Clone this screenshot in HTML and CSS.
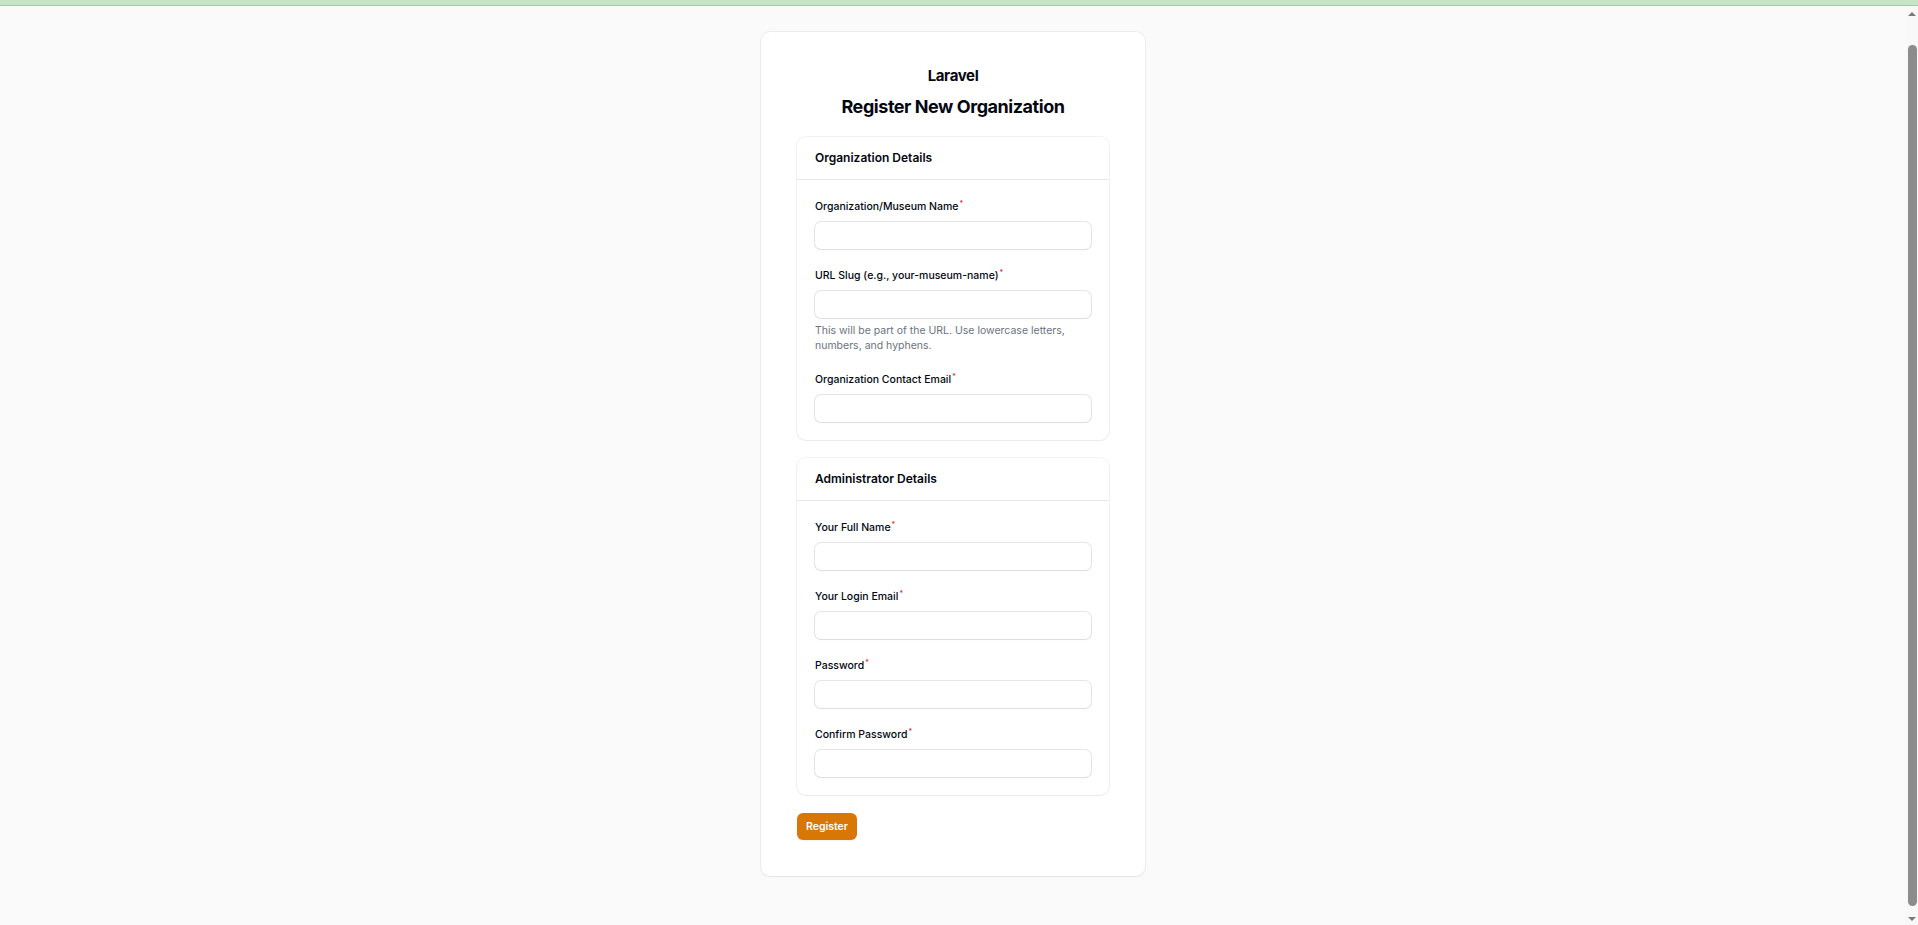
FILE: index.html
```html
<!DOCTYPE html>
<html lang="en">
<head>
<meta charset="utf-8">
<title>Register New Organization</title>
<link rel="stylesheet" href="styles.css">
</head>
<body>
<div class="topbar"></div>
<div class="viewport">
  <main class="page">
    <div class="card">
      <header class="simple-header">
        <div class="brand">Laravel</div>
        <h1 class="heading">Register New Organization</h1>
      </header>
      <form class="form">
        <section class="section">
          <div class="section-header"><h3 class="section-title">Organization Details</h3></div>
          <div class="section-content">
            <div class="field">
              <label class="label">Organization/Museum Name<sup class="req">*</sup></label>
              <div class="input-wrap"><input class="input" type="text"></div>
            </div>
            <div class="field">
              <label class="label">URL Slug (e.g., your-museum-name)<sup class="req">*</sup></label>
              <div class="input-wrap"><input class="input" type="text"></div>
              <p class="helper">This will be part of the URL. Use lowercase letters, numbers, and hyphens.</p>
            </div>
            <div class="field">
              <label class="label">Organization Contact Email<sup class="req">*</sup></label>
              <div class="input-wrap"><input class="input" type="email"></div>
            </div>
          </div>
        </section>
        <section class="section">
          <div class="section-header"><h3 class="section-title">Administrator Details</h3></div>
          <div class="section-content">
            <div class="field">
              <label class="label">Your Full Name<sup class="req">*</sup></label>
              <div class="input-wrap"><input class="input" type="text"></div>
            </div>
            <div class="field">
              <label class="label">Your Login Email<sup class="req">*</sup></label>
              <div class="input-wrap"><input class="input" type="email"></div>
            </div>
            <div class="field">
              <label class="label">Password<sup class="req">*</sup></label>
              <div class="input-wrap"><input class="input" type="password"></div>
            </div>
            <div class="field">
              <label class="label">Confirm Password<sup class="req">*</sup></label>
              <div class="input-wrap"><input class="input" type="password"></div>
            </div>
          </div>
        </section>
        <div class="actions">
          <button class="btn" type="button">Register</button>
        </div>
      </form>
    </div>
  </main>
  <div class="scrollbar">
    <div class="sb-btn"><span class="arrow-up"></span></div>
    <div class="sb-track"><div class="sb-thumb"></div></div>
    <div class="sb-btn"><span class="arrow-down"></span></div>
  </div>
</div>
</body>
</html>
```
FILE: styles.css
```css
* { box-sizing: border-box; }
html, body { height: 100%; }
body {
  margin: 0;
  font-family: Inter, "Noto Sans", "Liberation Sans", sans-serif;
  color: #030712;
  background: #fafafa;
  display: flex;
  flex-direction: column;
  overflow: hidden;
}
.topbar {
  height: 6px;
  flex: none;
  background: #c6e4c6;
  border-bottom: 1px solid #a8c8a8;
}
.viewport {
  flex: 1;
  display: flex;
  min-height: 0;
}
.page {
  flex: 1;
  display: flex;
  justify-content: center;
  align-items: flex-start;
  padding-top: 26px;
}
.card {
  width: 384px;
  background: #fff;
  border-radius: 9px;
  box-shadow: 0 1px 2px rgba(0,0,0,0.04), 0 0 0 1px rgba(3,7,18,0.05);
  padding: 36px;
}
.simple-header {
  display: flex;
  flex-direction: column;
  align-items: center;
}
.brand {
  font-size: 15px;
  line-height: 15px;
  font-weight: 700;
  letter-spacing: -0.025em;
  margin-bottom: 12px;
}
.heading {
  margin: 0;
  font-size: 18px;
  line-height: 24px;
  font-weight: 700;
  letter-spacing: -0.025em;
  text-align: center;
}
.form {
  margin-top: 18px;
  display: grid;
  gap: 18px;
}
.section {
  background: #fff;
  border-radius: 9px;
  box-shadow: 0 1px 2px rgba(0,0,0,0.04), 0 0 0 1px rgba(3,7,18,0.05);
}
.section-header {
  padding: 12px 18px;
}
.section-title {
  margin: 0;
  font-size: 12px;
  line-height: 18px;
  font-weight: 600;
}
.section-content {
  border-top: 1px solid #e5e7eb;
  padding: 18px;
  display: grid;
  gap: 18px;
}
.field {
  display: grid;
  gap: 6px;
}
.label {
  font-size: 10.5px;
  line-height: 18px;
  font-weight: 500;
  color: #030712;
}
.req {
  color: #dc2626;
  font-weight: 500;
  font-size: 7px;
  vertical-align: top;
  position: relative;
  top: -3px;
  margin-left: 1px;
}
.input-wrap {
  border-radius: 6px;
  background: #fff;
  box-shadow: 0 1px 2px rgba(0,0,0,0.04), 0 0 0 1px rgba(3,7,18,0.1);
}
.input {
  display: block;
  width: 100%;
  height: 27px;
  border: 0;
  outline: 0;
  background: transparent;
  padding: 4.5px 9px;
  font-family: inherit;
  font-size: 10.5px;
  line-height: 18px;
  color: #030712;
}
.helper {
  margin: -1px 0 0;
  font-size: 10.5px;
  line-height: 15px;
  color: #6b7280;
}
.actions {
  display: flex;
}
.btn {
  height: 27px;
  padding: 0 9px;
  border: 0;
  border-radius: 6px;
  background: #d97706;
  color: #fff;
  font-family: inherit;
  font-size: 10.5px;
  line-height: 15px;
  font-weight: 600;
  box-shadow: 0 1px 2px rgba(0,0,0,0.05);
}
.scrollbar {
  width: 12px;
  flex: none;
  display: flex;
  flex-direction: column;
  background: #f8f8f8;
}
.sb-btn {
  height: 14px;
  flex: none;
  display: flex;
  align-items: center;
  justify-content: center;
}
.arrow-up, .arrow-down {
  width: 0;
  height: 0;
  border-left: 4px solid transparent;
  border-right: 4px solid transparent;
}
.arrow-up { border-bottom: 4px solid #7a7a7a; margin-top: 1px; }
.arrow-down { border-top: 4px solid #7a7a7a; margin-top: 2px; }
.sb-track {
  flex: 1;
  padding: 25px 1px 5px 2px;
  display: flex;
}
.sb-thumb {
  flex: 1;
  background: #8c8c8c;
  border-radius: 5px;
}
```
